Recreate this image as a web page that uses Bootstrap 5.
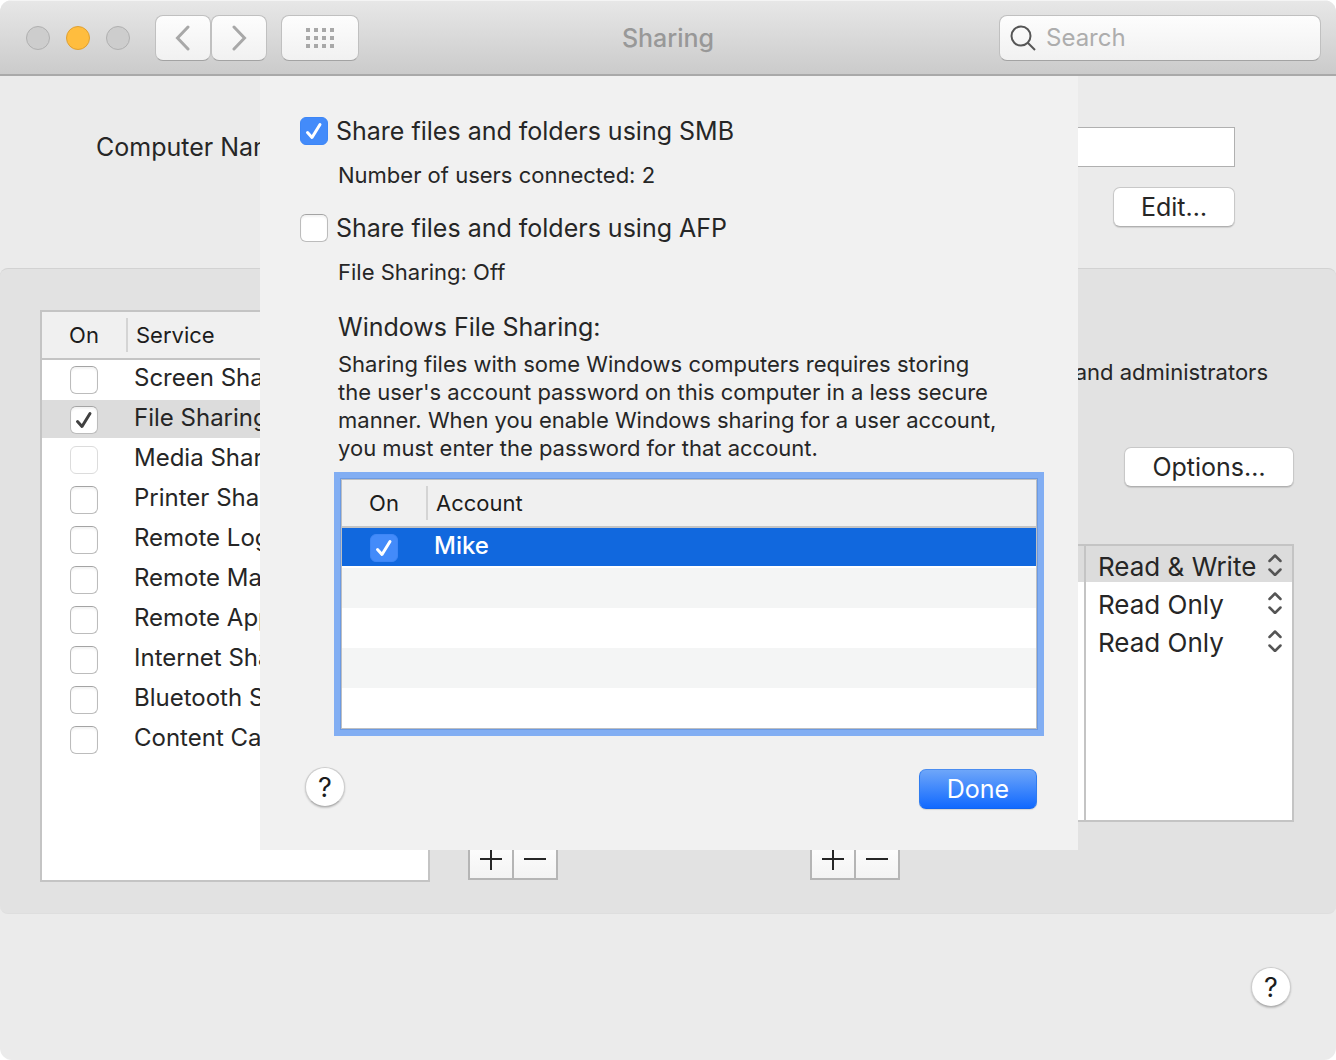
<!DOCTYPE html>
<html lang="en">
<head>
<meta charset="utf-8">
<meta name="viewport" content="width=device-width, initial-scale=1">
<title>Sharing</title>
<link href="https://cdn.jsdelivr.net/npm/bootstrap@5.3.0/dist/css/bootstrap.min.css" rel="stylesheet">
<style>
  body { font-family: Inter, "Liberation Sans", sans-serif; font-size: 24px; line-height: 28px; color: #262626; background: #fff; }
  .mac-window { background: #ebebeb; border-radius: 12px; overflow: hidden; }
  .fs-label { font-size: 25px; line-height: 32px; }
  .fs-note { font-size: 22px; line-height: 28px; }

  /* title bar */
  .titlebar { height: 76px; background: linear-gradient(#e7e7e7, #cbcbcb); border-bottom: 2px solid #a9a9a9; padding: 0 15px; border-top: 1px solid #f4f4f4; }
  .titlebar-side { flex: 1 1 0; }
  .lights { padding: 0 25px 0 11px; }
  .light { width: 24px; height: 24px; border-radius: 50%; border: 1px solid #b0b0b0; background: #cdcdcd; padding: 0; }
  .light-min { background: #ffbd3e; border-color: #dfa032; }
  .tool-btn { width: 56px; height: 46px; padding: 0; border: 1px solid #c0c0c0; border-bottom-color: #a3a3a3; border-radius: 8px; background: linear-gradient(#fdfdfd, #f1f1f1); display: flex; align-items: center; justify-content: center; }
  .tool-wide { width: 78px; margin-left: 14px; }
  .window-title { color: #989898; font-size: 25px; line-height: 32px; margin: 0; font-weight: 500; }
  .search-box { width: 322px; height: 46px; border: 1px solid #c0c0c0; border-bottom-color: #a3a3a3; border-radius: 8px; background: linear-gradient(#fdfdfd, #f1f1f1); padding: 0 10px; }
  .search-box input { border: 0; background: transparent; outline: 0; min-width: 0; padding: 0; font-size: 24px; }
  .search-box input::placeholder { color: #adadad; }

  /* controls */
  .push { height: 40px; padding: 0; background: #fff; border: 1px solid #c8c8c8; border-bottom-color: #b0b0b0; border-radius: 7px; box-shadow: 0 1px 1px rgba(0,0,0,.12); font-size: 25px; line-height: 36px; color: #262626; }
  .push-edit { width: 122px; }
  .push-options { width: 170px; }
  .push-done { width: 118px; margin-top: 2px; color: #fff; border-color: #4b8df0 #2f7cf0 #1265f0; background: linear-gradient(#6ea6f9, #1169ff); }
  .help { width: 40px; height: 40px; border-radius: 50%; border: 1px solid #cdcdcd; border-bottom-color: #b2b2b2; background: #fff; box-shadow: 0 1px 2px rgba(0,0,0,.2); font-size: 27px; line-height: 38px; padding: 1px 0 0; color: #1c1c1c; }
  .name-field { height: 40px; border: 1px solid #b0b0b0; border-radius: 0; background: #fff; }
  .edit-line { padding-top: 20px; }
  .tick { appearance: none; display: block; flex: none; width: 28px; height: 28px; margin: 0; border: 1px solid #bcbcbc; border-top-color: #a4a4a4; border-radius: 6px; background: #fff center / 26px 26px no-repeat; box-shadow: inset 0 2px 2px rgba(0,0,0,.05); }
  .tick:disabled { border-color: #dcdcdc; box-shadow: none; }
  .tick:checked { background-image: url("data:image/svg+xml,%3Csvg xmlns='http://www.w3.org/2000/svg' viewBox='0 0 26 26'%3E%3Cpath d='M6.500 14.500l4.500 5L19 6.500' fill='none' stroke='%23404040' stroke-width='3' stroke-linecap='round' stroke-linejoin='round'/%3E%3C/svg%3E"); }
  .tick-blue:checked { border-color: #3d86f6; background-color: #438bfa; box-shadow: none; background-image: url("data:image/svg+xml,%3Csvg xmlns='http://www.w3.org/2000/svg' viewBox='0 0 26 26'%3E%3Cpath d='M6.500 14.500l4.500 5L19 6.500' fill='none' stroke='%23fff' stroke-width='3' stroke-linecap='round' stroke-linejoin='round'/%3E%3C/svg%3E"); }

  /* tables with an "On" column */
  .grid-box { background: #fff; border: 2px solid #c4c4c4; }
  .on-grid { width: 100%; table-layout: fixed; border-collapse: separate; border-spacing: 0; }
  .on-grid col:first-child { width: 84px; }
  .on-grid th { height: 48px; padding: 0; background: #f0f0f0; border-bottom: 2px solid #c4c4c4; font-weight: 400; font-size: 22px; line-height: 34px; color: #1c1c1c; white-space: nowrap; }
  .on-grid th:first-child { text-align: center; }
  .head-split { display: block; border-left: 2px solid #d4d4d4; padding-left: 8px; }
  .on-grid td { height: 40px; padding: 0; vertical-align: top; border-bottom: 2px solid #fff; white-space: nowrap; overflow: hidden; font-size: 24px; line-height: 36px; }
  .on-grid td:first-child .tick { margin: 6px auto 0 28px; }
  .on-grid td:last-child { padding-left: 8px; }
  .row-current td { background: #dcdcdc; background-clip: padding-box; }
  .services { width: 390px; height: 572px; }

  /* main panel */
  .upper { padding: 51px 101px 41px 96px; }
  .panel { background: #e2e2e2; border-top: 1px solid #d2d2d2; border-bottom: 1px solid #dedede; border-radius: 8px; padding: 41px 42px 31px 40px; }
  .detail { margin-left: 38px; padding: 48px 0 2px; }
  .who { padding-right: 26px; margin-bottom: 61px; }
  .lists { margin-top: 57px; gap: 20px; }
  .folders { width: 322px; }
  .list-body { height: 278px; }
  .access { width: 208px; border-left: 2px solid #c4c4c4; }
  .access-row { height: 38px; }
  .access-row.first { height: 36px; }
  .access-row.picked { background: #dcdcdc; }
  .access select { appearance: none; border: 0; background: transparent; padding: 2px 0 0 12px; font-size: 26px; line-height: 30px; height: 32px; width: 174px; color: #262626; }
  .access-arrows { margin: 0 10px 6px 0; }
  .pm { width: 90px; border: 2px solid #b5b5b5; background: linear-gradient(#fff, #f3f3f3); margin-top: 16px; }
  .pm button { flex: 1 1 0; height: 38px; padding: 0; border: 0; background: transparent; display: flex; align-items: center; justify-content: center; }
  .pm button + button { border-left: 2px solid #b5b5b5; }
  .bottom { padding: 53px 45px; }

  /* sheet that slides over the window */
  .sheet-layer { position: absolute; top: 76px; left: 2px; right: 0; pointer-events: none; }
  .sheet { width: 818px; background: #f1f1f1; padding: 39px 40px 41px; pointer-events: auto; }
  .sheet-indent { padding-left: 38px; }
  .status-line { margin: 14px 0 23px; }
  .sheet-title { padding-top: 2px; margin-bottom: 7px; }
  .accounts { border: 1px solid #bdbfc2; box-shadow: 0 0 0 1px #6c9ae2, 0 0 0 7px #82aef3; margin: 17px 1px 0 41px; }
  .accounts .row-selected td { background: #1168de; background-clip: padding-box; color: #fff; font-weight: 500; }
  .accounts .row-shade td { background: #f4f5f5; border-bottom-color: #f4f5f5; }
  .sheet-actions { margin-top: 38px; padding: 0 1px 0 5px; }
</style>
<script src="https://cdn.jsdelivr.net/npm/bootstrap@5.3.0/dist/js/bootstrap.bundle.min.js"></script>
</head>
<body>
<div class="mac-window position-relative min-vh-100">

  <header class="titlebar d-flex align-items-center">
    <div class="titlebar-side d-flex align-items-center">
      <div class="lights d-flex gap-3">
        <button type="button" class="light" aria-label="Close"></button>
        <button type="button" class="light light-min" aria-label="Minimize"></button>
        <button type="button" class="light" aria-label="Zoom"></button>
      </div>
      <button type="button" class="tool-btn" aria-label="Back"><svg width="16" height="26" viewBox="0 0 16 26" fill="none" stroke="#a8a8a8" stroke-width="3" stroke-linecap="round"><path d="M13 2L2.500 13L13 24"/></svg></button>
      <button type="button" class="tool-btn" aria-label="Forward"><svg width="16" height="26" viewBox="0 0 16 26" fill="none" stroke="#a8a8a8" stroke-width="3" stroke-linecap="round"><path d="M3 2L13.500 13L3 24"/></svg></button>
      <button type="button" class="tool-btn tool-wide" aria-label="Show all"><svg width="28" height="20" viewBox="0 0 28 20" fill="#a8a8a8"><path d="M0 0h4v4H0zM8 0h4v4H8zM16 0h4v4h-4zM24 0h4v4h-4zM0 8h4v4H0zM8 8h4v4H8zM16 8h4v4h-4zM24 8h4v4h-4zM0 16h4v4H0zM8 16h4v4H8zM16 16h4v4h-4zM24 16h4v4h-4z"/></svg></button>
    </div>
    <h1 class="window-title">Sharing</h1>
    <div class="titlebar-side d-flex justify-content-end">
      <label class="search-box d-flex align-items-center gap-2">
        <svg class="flex-shrink-0" width="28" height="28" viewBox="0 0 28 28" fill="none" stroke="#555" stroke-width="2"><circle cx="11" cy="12" r="9.500"/><path d="M17.500 18.500L25 26"/></svg>
        <input type="search" class="flex-grow-1" placeholder="Search" aria-label="Search">
      </label>
    </div>
  </header>

  <main>
    <section class="upper">
      <div class="d-flex align-items-center gap-2">
        <label for="cname" class="fs-label text-nowrap">Computer Name:</label>
        <input id="cname" type="text" class="name-field flex-grow-1">
      </div>
      <div class="edit-line d-flex justify-content-end">
        <button type="button" class="push push-edit">Edit…</button>
      </div>
    </section>

    <section class="panel d-flex align-items-start">
      <div class="grid-box services flex-shrink-0">
        <table class="on-grid">
          <colgroup><col><col></colgroup>
          <thead><tr><th>On</th><th><span class="head-split">Service</span></th></tr></thead>
          <tbody>
            <tr><td><input class="tick" type="checkbox" id="s1"></td><td><label for="s1">Screen Sharing</label></td></tr>
            <tr class="row-current"><td><input class="tick" type="checkbox" id="s2" checked></td><td><label for="s2">File Sharing</label></td></tr>
            <tr><td><input class="tick" type="checkbox" id="s3" disabled></td><td><label for="s3">Media Sharing</label></td></tr>
            <tr><td><input class="tick" type="checkbox" id="s4"></td><td><label for="s4">Printer Sharing</label></td></tr>
            <tr><td><input class="tick" type="checkbox" id="s5"></td><td><label for="s5">Remote Login</label></td></tr>
            <tr><td><input class="tick" type="checkbox" id="s6"></td><td><label for="s6">Remote Management</label></td></tr>
            <tr><td><input class="tick" type="checkbox" id="s7"></td><td><label for="s7">Remote Apple Events</label></td></tr>
            <tr><td><input class="tick" type="checkbox" id="s8"></td><td><label for="s8">Internet Sharing</label></td></tr>
            <tr><td><input class="tick" type="checkbox" id="s9"></td><td><label for="s9">Bluetooth Sharing</label></td></tr>
            <tr><td><input class="tick" type="checkbox" id="s10"></td><td><label for="s10">Content Caching</label></td></tr>
          </tbody>
        </table>
      </div>

      <div class="detail flex-grow-1">
        <p class="who fs-note text-end">and administrators</p>
        <div class="d-flex justify-content-end"><button type="button" class="push push-options">Options…</button></div>
        <div class="lists d-flex">
          <div class="folders flex-shrink-0">
            <div class="grid-box list-body"></div>
            <div class="pm d-flex">
              <button type="button" aria-label="Add folder"><svg width="22" height="22" viewBox="0 0 22 22" fill="#262626"><path d="M0 10h22v2H0zM10 0h2v22h-2z"/></svg></button>
              <button type="button" aria-label="Remove folder"><svg width="22" height="22" viewBox="0 0 22 22" fill="#262626"><path d="M0 10h22v2H0z"/></svg></button>
            </div>
          </div>
          <div class="flex-grow-1">
            <div class="grid-box list-body d-flex">
              <div class="flex-grow-1"><div class="access-row first picked"></div></div>
              <div class="access">
                <div class="access-row first picked d-flex align-items-end justify-content-between">
                  <select aria-label="Owner access"><option>Read &amp; Write</option><option>Read Only</option></select>
                  <svg class="access-arrows" width="14" height="22" viewBox="0 0 14 22" fill="none" stroke="#555" stroke-width="2.500" stroke-linecap="round" stroke-linejoin="round"><path d="M1.500 7L7 1.500L12.500 7M1.500 15.500L7 21L12.500 15.500"/></svg>
                </div>
                <div class="access-row d-flex align-items-end justify-content-between">
                  <select aria-label="Group access"><option>Read Only</option><option>Read &amp; Write</option></select>
                  <svg class="access-arrows" width="14" height="22" viewBox="0 0 14 22" fill="none" stroke="#555" stroke-width="2.500" stroke-linecap="round" stroke-linejoin="round"><path d="M1.500 7L7 1.500L12.500 7M1.500 15.500L7 21L12.500 15.500"/></svg>
                </div>
                <div class="access-row d-flex align-items-end justify-content-between">
                  <select aria-label="Everyone access"><option>Read Only</option><option>Read &amp; Write</option></select>
                  <svg class="access-arrows" width="14" height="22" viewBox="0 0 14 22" fill="none" stroke="#555" stroke-width="2.500" stroke-linecap="round" stroke-linejoin="round"><path d="M1.500 7L7 1.500L12.500 7M1.500 15.500L7 21L12.500 15.500"/></svg>
                </div>
              </div>
            </div>
            <div class="pm d-flex">
              <button type="button" aria-label="Add user"><svg width="22" height="22" viewBox="0 0 22 22" fill="#262626"><path d="M0 10h22v2H0zM10 0h2v22h-2z"/></svg></button>
              <button type="button" aria-label="Remove user"><svg width="22" height="22" viewBox="0 0 22 22" fill="#262626"><path d="M0 10h22v2H0z"/></svg></button>
            </div>
          </div>
        </div>
      </div>
    </section>

    <div class="bottom d-flex justify-content-end">
      <button type="button" class="help" aria-label="Help">?</button>
    </div>
  </main>

  <div class="sheet-layer d-flex justify-content-center">
    <section class="sheet" role="dialog" aria-label="File Sharing options">
      <div class="d-flex align-items-center gap-2">
        <input class="tick tick-blue" type="checkbox" id="smb" checked>
        <label for="smb" class="fs-label">Share files and folders using SMB</label>
      </div>
      <p class="sheet-indent fs-note status-line">Number of users connected: 2</p>
      <div class="d-flex align-items-center gap-2">
        <input class="tick tick-blue" type="checkbox" id="afp">
        <label for="afp" class="fs-label">Share files and folders using AFP</label>
      </div>
      <p class="sheet-indent fs-note status-line">File Sharing: Off</p>
      <h2 class="sheet-indent fs-label fw-normal sheet-title">Windows File Sharing:</h2>
      <p class="sheet-indent fs-note mb-0">Sharing files with some Windows computers requires storing<br>the user's account password on this computer in a less secure<br>manner. When you enable Windows sharing for a user account,<br>you must enter the password for that account.</p>
      <div class="grid-box accounts">
        <table class="on-grid">
          <colgroup><col><col></colgroup>
          <thead><tr><th>On</th><th><span class="head-split">Account</span></th></tr></thead>
          <tbody>
            <tr class="row-selected"><td><input class="tick tick-blue" type="checkbox" id="a1" checked></td><td><label for="a1">Mike</label></td></tr>
            <tr class="row-shade"><td></td><td></td></tr>
            <tr><td></td><td></td></tr>
            <tr class="row-shade"><td></td><td></td></tr>
            <tr><td></td><td></td></tr>
          </tbody>
        </table>
      </div>
      <div class="sheet-actions d-flex align-items-start justify-content-between">
        <button type="button" class="help" aria-label="Help">?</button>
        <button type="button" class="push push-done">Done</button>
      </div>
    </section>
  </div>
</div>
</body>
</html>
